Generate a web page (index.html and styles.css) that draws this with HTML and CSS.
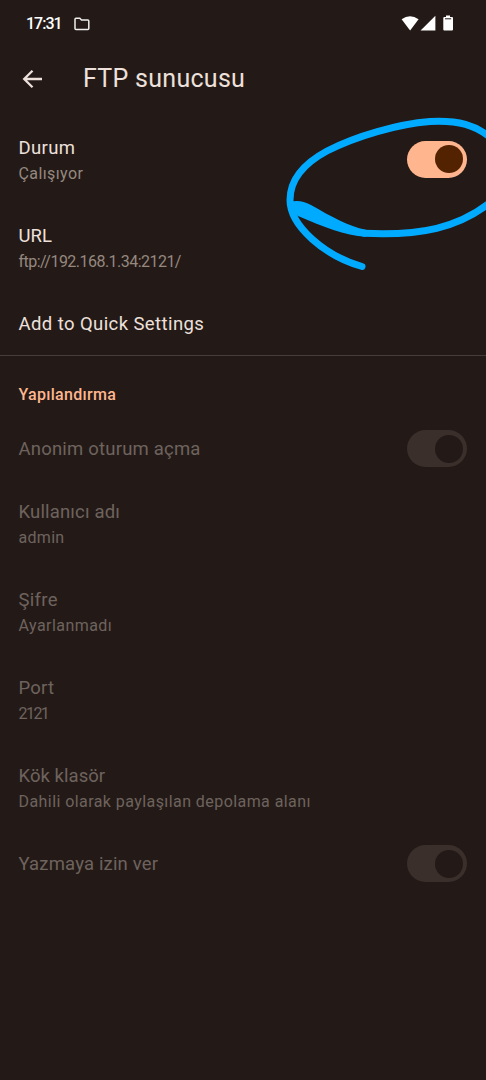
FILE: index.html
```html
<!DOCTYPE html>
<html lang="tr">
<head>
<meta charset="utf-8">
<title>FTP sunucusu</title>
<link rel="stylesheet" href="styles.css">
</head>
<body>
<div class="screen">
  <header class="status-bar">
    <span class="clock">17:31</span>
    <svg class="folder" width="16" height="14" viewBox="0 0 16 14"><path d="M1 2.2Q1 1.2 2 1.2H5.8L7.5 3H13.8Q14.8 3 14.8 4V11.4Q14.8 12.4 13.8 12.4H2Q1 12.4 1 11.4Z"/></svg>
    <svg class="signals" width="54" height="18" viewBox="0 0 54 18"><path d="M1.6 4.3Q10 -1.9 18.6 4.3L10.1 15.5Z"/><path d="M35.4 .8V15.5H20.6Z"/><path d="M46 .4H50V2H52Q53 2 53 3V14.5Q53 15.5 52 15.5H44.3Q43.3 15.5 43.3 14.5V3Q43.3 2 44.3 2H46Z"/><path class="battery-level" d="M45 3.8H51.2"/></svg>
  </header>
  <div class="app-bar">
    <svg class="back" width="22" height="20" viewBox="0 0 22 20"><path d="M20 10H2.5M10.5 1.7L2.2 10L10.5 18.3"/></svg>
    <h1 class="heading">FTP sunucusu</h1>
  </div>
  <main>
    <section class="group">
      <div class="row tall"><div class="texts"><div class="title t-durum">Durum</div><div class="summary t-running">Çalışıyor</div></div><div class="switch on"></div></div>
      <div class="row tall"><div class="texts"><div class="title t-url">URL</div><div class="summary t-address">ftp://192.168.1.34:2121/</div></div></div>
      <div class="row short"><div class="title t-quick">Add to Quick Settings</div></div>
    </section>
    <section class="group config">
      <h2 class="section-title">Yapılandırma</h2>
      <div class="row short"><div class="title t-anon">Anonim oturum açma</div><div class="switch"></div></div>
      <div class="row tall"><div class="texts"><div class="title t-user">Kullanıcı adı</div><div class="summary t-admin">admin</div></div></div>
      <div class="row tall"><div class="texts"><div class="title t-pass">Şifre</div><div class="summary t-unset">Ayarlanmadı</div></div></div>
      <div class="row tall"><div class="texts"><div class="title t-port">Port</div><div class="summary t-number">2121</div></div></div>
      <div class="row tall"><div class="texts"><div class="title t-root">Kök klasör</div><div class="summary t-storage">Dahili olarak paylaşılan depolama alanı</div></div></div>
      <div class="row short"><div class="title t-write">Yazmaya izin ver</div><div class="switch"></div></div>
    </section>
  </main>
  <svg class="scribble" width="216" height="170" viewBox="0 0 216 170">
    <path class="stroke" d="M222 29C206 15 188 10 160 11.500C128 14 86 26 57 41C31 55 20 72 20 90C20 116 55 146 92 156.500"/>
    <path class="stroke" d="M94 123.300C150 126 189 118 222 91"/>
    <path class="wedge" d="M20 92C26 90 33 90.500 41 95C62 107 78 116 96 119.800V126.800C74 125.500 54 117 28 106L22 101Z"/>
  </svg>
</div>
</body>
</html>
```
FILE: styles.css
```css
* { box-sizing: border-box; }
body { margin: 0; background: #231a17; }
.screen {
  position: relative;
  width: 486px;
  height: 1080px;
  overflow: hidden;
  background: #231a17;
  color: #eee0db;
  font-family: Roboto, "Noto Sans", sans-serif;
}
.status-bar {
  display: flex;
  align-items: center;
  height: 47px;
  padding: 0 32px 0 26px;
  color: #fff;
}
.clock { width: 48px; font-size: 16px; font-weight: 500; letter-spacing: -1px; }
.folder { fill: none; stroke: #eee; stroke-width: 1.5; }
.signals { margin-left: auto; fill: #fff; }
.battery-level { stroke: #231a17; stroke-width: 1; }
.app-bar {
  display: flex;
  align-items: center;
  gap: 39px;
  height: 63px;
  padding: 0 21px 0 22px;
}
.back { fill: none; stroke: #eee0db; stroke-width: 2.3; }
.heading { margin: 0; font-size: 25px; line-height: 32px; font-weight: 400; letter-spacing: .28px; }
.group { padding-top: 6px; border-bottom: 1px solid #463c38; }
.config { padding-top: 22px; border: 0; }
.row {
  display: flex;
  align-items: center;
  justify-content: space-between;
  padding: 0 19px 0 18.5px;
}
.tall { height: 88px; }
.short { height: 63px; }
.title { font-size: 18.5px; line-height: 26px; white-space: nowrap; }
.summary { color: #96887f; font-size: 16px; line-height: 25px; white-space: nowrap; }
.section-title {
  margin: 0 0 5px 18.5px;
  color: #ffb68e;
  font-size: 16px;
  line-height: 34px;
  font-weight: 500;
  letter-spacing: .3px;
}
.config .title, .config .summary { color: #6e635e; }

/* Tracking per label */
.t-durum { letter-spacing: .35px; }
.t-running { letter-spacing: .4px; }
.t-url { letter-spacing: .1px; }
.t-address { letter-spacing: -.53px; }
.t-quick { letter-spacing: .41px; }
.t-anon { letter-spacing: .2px; }
.t-user { letter-spacing: .16px; }
.t-admin { letter-spacing: .3px; }
.t-pass { letter-spacing: .3px; }
.t-unset { letter-spacing: .45px; }
.t-port { letter-spacing: .2px; }
.t-number { letter-spacing: -1.55px; }
.t-root { letter-spacing: .05px; }
.t-storage { letter-spacing: .43px; }
.t-write { letter-spacing: .16px; }

.switch {
  display: flex;
  justify-content: flex-end;
  align-items: center;
  width: 60px;
  height: 37px;
  padding-right: 4px;
  border-radius: 19px;
  background: #3a2f2a;
}
.switch::before {
  content: "";
  width: 28px;
  height: 28px;
  border-radius: 50%;
  background: #231a17;
}
.on { margin-bottom: 2px; background: #ffb68e; }
.on::before { background: #532200; }
.scribble { position: absolute; left: 270px; top: 110px; }
.stroke { fill: none; stroke: #00aaff; stroke-width: 7; stroke-linecap: round; }
.wedge { fill: #00aaff; }
```
